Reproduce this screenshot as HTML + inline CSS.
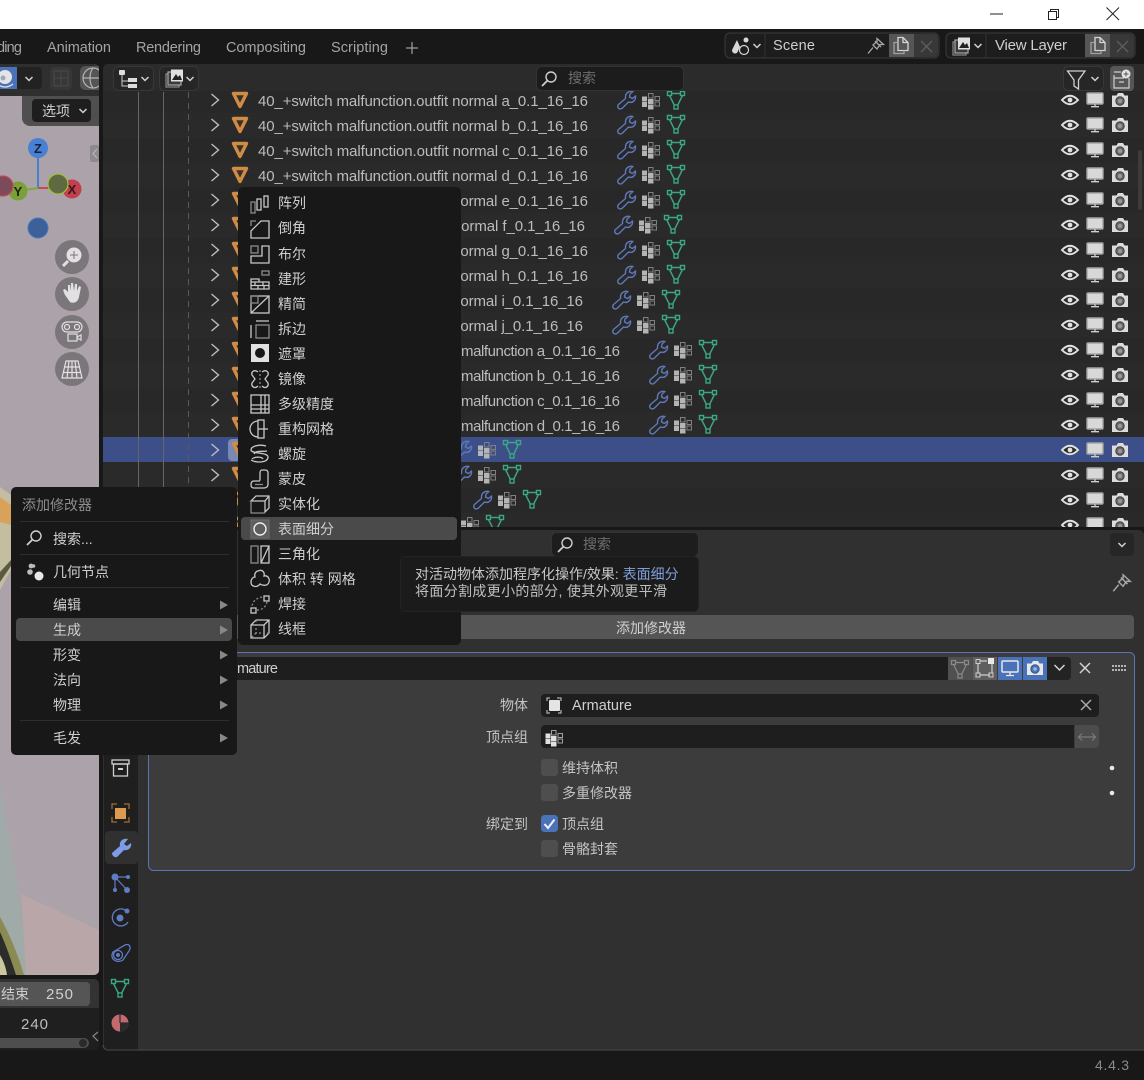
<!DOCTYPE html>
<html><head><meta charset="utf-8"><style>
html,body{margin:0;padding:0;background:#181818;width:1144px;height:1080px;overflow:hidden}
svg{display:block;font-family:"Liberation Sans","Noto Sans CJK SC",sans-serif}
.t{font-size:15px;fill:#bcbcbc}
.m{font-size:14px;fill:#cfcfcf}
.l{font-size:14.5px;fill:#cfcfcf}
.p{font-size:14px;fill:#c4c4c4}
.s{fill:none;stroke:#c8c8c8;stroke-width:1.3}
.d{fill:none;stroke:#8a8a8a;stroke-width:1.3}
</style></head><body>
<svg width="1144" height="1080" viewBox="0 0 1144 1080" xmlns="http://www.w3.org/2000/svg">
<defs>
<g id="tri"><path d="M-6.500-6.500H6.500L0 6.500Z" fill="#3a3028" stroke="#d08b47" stroke-width="3.400" stroke-linejoin="round"/></g>
<path id="chev" d="M-3.500-6L3.500 0L-3.500 6" fill="none" stroke="#bdbdbd" stroke-width="1.400"/>
<path id="dn" d="M-3.500-2L0 1.500L3.500-2" fill="none" stroke="#d0d0d0" stroke-width="1.500"/>
<path id="wr" d="M7-8.500C3-9.500-.5-7-.5-3L-.5-1.500L-7.500 4.500C-10 7.500-6 10.500-3.500 8L2.500 2C7 3.500 10 0 9.500-4L6.500-1.500L3.500-3L4-6Z" fill="none" stroke="#6078b8" stroke-width="1.400" stroke-linejoin="round"/>
<g id="vg"><g fill="#b4b4b4"><rect x="-9" y="-3.500" width="5" height="5"/><rect x="-9" y="2" width="5" height="5"/><rect x="-3" y="-1" width="5.500" height="5"/><rect x="-3" y="4.500" width="5.500" height="5"/></g><g fill="none" stroke="#808080"><rect x="-2.500" y="-6.500" width="4.500" height="4.500"/><rect x="4" y="-3.500" width="4.500" height="4"/><rect x="4" y="2" width="4.500" height="4"/></g></g>
<g id="gt" fill="none" stroke="#3aa880" stroke-width="1.400"><path d="M-5-6.500H5M-6.500-4.500L-1.500 5.500M6.500-4.500L1.500 5.500"/><rect x="-8.500" y="-8.500" width="4" height="4"/><rect x="4.500" y="-8.500" width="4" height="4"/><rect x="-2" y="5" width="4" height="4"/></g>
<g id="eye"><path d="M-8 0Q0-8.500 8 0Q0 8.500-8 0Z" fill="#2a2a2a" stroke="#e2e2e2" stroke-width="1.900"/><circle r="2.400" fill="#e2e2e2"/></g>
<g id="mon"><rect x="-8" y="-7" width="16" height="11" rx="1" fill="#d8d8d8" stroke="#a4a4a4" stroke-width="1.400"/><path d="M0 4V6.500M-4 6.700H4" stroke="#cfcfcf" stroke-width="1.300"/></g>
<g id="cam"><path d="M-8-4.500H-3.500L-2-7H3L4.500-4.500H8V7H-8Z" fill="#dcdcdc"/><circle cy="1" r="4.200" fill="#6a6a6a" stroke="#3e3e3e" stroke-width="1"/><circle cy="1" r="2" fill="#9a9a9a"/></g>
<g id="pin" fill="none" stroke="#a8a8a8" stroke-width="1.300"><path d="M-1-5L5 1M1-7.500L7.500-1.500L4-1.500L1 3L-3-1L1-4.500ZM-3 1.500L-8 7.500"/></g>
<path id="tm" d="M0-4.500L8 0L0 4.500Z" fill="#888"/>
<g id="srch" fill="none" stroke="#cfcfcf" stroke-width="1.400"><circle cx="2" cy="-2" r="5"/><path d="M-1.500 1.500L-7 7" stroke-width="1.800"/></g>
<g id="cp" fill="none" stroke="#d6d6d6" stroke-width="1.300"><path d="M-3-8H2L7-3V5H-3Z"/><path d="M-3-3H-7V8H3V5" stroke="#a0a0a0"/><path d="M2-8V-3H7"/></g>
<g id="vl"><rect x="-9" y="-4" width="13" height="13" fill="none" stroke="#8a8a8a" stroke-width="1.200"/><rect x="-7" y="-6" width="13" height="13" fill="#3a3a3a" stroke="#aaa" stroke-width="1.200"/><rect x="-4" y="-8.500" width="12" height="12" fill="#e0e0e0"/><path d="M-3 2L1-4L3-1L5-3L7 2Z" fill="#222"/></g>
<clipPath id="vc"><rect x="0" y="64" width="99" height="911"/></clipPath>
<clipPath id="oc"><rect x="103" y="90" width="1041" height="437"/></clipPath>
</defs>

<!-- title bar -->
<rect width="1144" height="29" fill="#fff"/>
<path d="M990 14H1003" stroke="#222" stroke-width="1"/>
<path d="M1048.500 11.500H1056.500V19.500H1048.500ZM1050.500 11V9.500H1058.500V17.500H1057" fill="none" stroke="#222" stroke-width="1"/>
<path d="M1106.500 7.500L1119 20M1119 7.500L1106.500 20" stroke="#222" stroke-width="1"/>
<rect y="29" width="1144" height="1051" fill="#181818"/>

<!-- tabs -->
<g font-size="14.500" fill="#a4a4a4">
<text x="-3" y="52" textLength="25">ding</text>
<text x="47" y="52" textLength="64">Animation</text>
<text x="136" y="52" textLength="65">Rendering</text>
<text x="226" y="52" textLength="80">Compositing</text>
<text x="331" y="52" textLength="57">Scripting</text>
</g>
<path d="M412 42V54M406 48H418" stroke="#9a9a9a" stroke-width="1.300"/>

<!-- scene widget -->
<rect x="725" y="33" width="214" height="25" rx="5" fill="#1d1d1d" stroke="#3a3a3a"/>
<rect x="889" y="34" width="25" height="23" fill="#565656"/>
<path d="M914 34H934a4 4 0 0 1 4 4V53a4 4 0 0 1-4 4H914Z" fill="#383838"/>
<path d="M765 34V57" stroke="#333"/>
<path d="M737 40L732 50C732 54 737 55 738 51L740 47Z" fill="#d8d8d8"/><circle cx="746" cy="40" r="2.500" fill="#d8d8d8"/><circle cx="744" cy="50" r="4.500" fill="none" stroke="#d8d8d8" stroke-width="1.200"/>
<use href="#dn" x="757" y="46"/>
<text x="773" y="50" class="l" textLength="42">Scene</text>
<use href="#pin" x="876" y="46"/>
<use href="#cp" x="901" y="45.500"/>
<path d="M921 41L932 52M932 41L921 52" stroke="#5c5c5c" stroke-width="1.500"/>
<rect x="946" y="33" width="189" height="25" rx="5" fill="#1d1d1d" stroke="#3a3a3a"/>
<rect x="1085" y="34" width="25" height="23" fill="#565656"/>
<path d="M1110 34H1130a4 4 0 0 1 4 4V53a4 4 0 0 1-4 4H1110Z" fill="#383838"/>
<path d="M986 34V57" stroke="#333"/>
<use href="#vl" x="962" y="46"/>
<use href="#dn" x="978" y="46"/>
<text x="995" y="50" font-size="15" fill="#cfcfcf" textLength="72">View Layer</text>
<use href="#cp" x="1098" y="45.500"/>
<path d="M1117 41L1128 52M1128 41L1117 52" stroke="#5c5c5c" stroke-width="1.500"/>

<!-- viewport -->
<path d="M0 64H94a5 5 0 0 1 5 5V970a5 5 0 0 1-5 5H0Z" fill="#aba3a9"/>
<path d="M0 64H94a5 5 0 0 1 5 5V96H0Z" fill="#2f2f2f"/>
<path d="M22 96H99V126H30a8 8 0 0 1-8-8Z" fill="#4f4f4f"/>
<rect x="32" y="99" width="59" height="23" rx="4" fill="#1e1e1e"/>
<text x="42" y="116" class="m">选项</text>
<use href="#dn" x="83" y="111"/>
<path d="M0 67H17V89H0Z" fill="#4a72b8"/>
<path d="M17 67H38a4 4 0 0 1 4 4V85a4 4 0 0 1-4 4H17Z" fill="#222"/>
<circle cx="5" cy="77" r="7" fill="#e4e4e4"/><circle cx="3" cy="78" r="2.500" fill="#9ab"/><path d="M-3 84Q5 90 13 84" fill="none" stroke="#e4e4e4" stroke-width="1.300"/>
<use href="#dn" x="29" y="79"/>
<rect x="50" y="67" width="22" height="23" rx="4" fill="#373737"/>
<rect x="54" y="71" width="14" height="15" fill="none" stroke="#4a4a4a"/><path d="M61 71V86M54 78H68" stroke="#4a4a4a"/>
<path d="M85 66H99V90H85a5 5 0 0 1-5-5V71a5 5 0 0 1 5-5Z" fill="#555"/>
<g clip-path="url(#vc)" fill="none" stroke="#b4b4b4" stroke-width="1.200"><circle cx="93" cy="78" r="10"/><path d="M83 78H103M93 68C89 73 89 83 93 88"/></g>
<rect x="90" y="145" width="9" height="17" rx="2" fill="#8f8a8e"/><path d="M97 149L93 153.500L97 158" fill="none" stroke="#b8b4b6" stroke-width="1.200"/>
<!-- gizmo -->
<path d="M38 156V189" stroke="#4a7fd0" stroke-width="2"/>
<path d="M38 188H58" stroke="#c84a50" stroke-width="2"/>
<path d="M18 191L38 188" stroke="#7fa83c" stroke-width="2"/>
<circle cx="38" cy="148" r="10" fill="#4a80d4"/><text x="38" y="153" font-size="13" font-weight="bold" text-anchor="middle" fill="#16223c">Z</text>
<circle cx="18" cy="191" r="9.500" fill="#7ca038"/><text x="18" y="196" font-size="13" font-weight="bold" text-anchor="middle" fill="#1a2410">Y</text>
<circle cx="72" cy="189" r="9.500" fill="#c04050"/><text x="72" y="194" font-size="13" font-weight="bold" text-anchor="middle" fill="#3a1218">X</text>
<circle cx="3" cy="186" r="10" fill="#7c4a58" stroke="#c04a5a" stroke-width="1.200"/>
<circle cx="58" cy="184" r="10" fill="#5f6a40" stroke="#9cc040" stroke-width="1.200"/>
<circle cx="38" cy="228" r="10" fill="#3d6098" stroke="#4a78c0" stroke-width="1"/>
<!-- nav -->
<g fill="#7b767a"><circle cx="72" cy="257" r="17"/><circle cx="72" cy="294" r="17"/><circle cx="72" cy="332" r="17"/><circle cx="72" cy="369" r="17"/></g>
<circle cx="74" cy="255" r="7.500" fill="#e2e0e2"/><path d="M74 251V259M70 255H78" stroke="#7b767a"/><path d="M68 261L63 266" stroke="#e2e0e2" stroke-width="3"/>
<path d="M65 295L63 290L65 289L68 292V285L70 285L71 291V283H73L74 291L75 284H77L77 291L79 286L81 287L79 297C78 302 74 304 70 302Z" fill="#e2e0e2"/>
<g fill="none" stroke="#e2e0e2" stroke-width="1.200"><rect x="62" y="322" width="20" height="10" rx="5"/><circle cx="67" cy="327" r="2.500"/><circle cx="77" cy="327" r="2.500"/><rect x="68" y="334" width="9" height="7"/><path d="M77 337L81 335V340L77 338"/></g>
<g fill="none" stroke="#e2e0e2" stroke-width="1.200"><path d="M66 361H78L82 378H62ZM72 361V378M64 367H80M63 372.500H81M69 361L67 378M75 361L77 378"/></g>
<!-- model bits -->
<path d="M0 487L11 495V570L0 590Z" fill="#c4bea0"/>
<path d="M0 497L11 505V525L0 522Z" fill="#d8a25a"/>
<path d="M0 572L11 560V566L0 582Z" fill="#5a5a40"/>
<path d="M0 783L17 883L28 967L25 975H0Z" fill="#a0aaa8"/>
<path d="M21 894L99 930V970a5 5 0 0 1-5 5H26Z" fill="#b8a6a8"/>
<path d="M0 917C10 935 18 955 24 975H0Z" fill="#8a8a52"/>
<path d="M0 932C6 945 11 960 16 975H0Z" fill="#2c2c2a"/>
<path d="M0 955C3 960 6 967 7 975H0Z" fill="#c9c79c"/>

<!-- timeline -->
<path d="M0 979H94a5 5 0 0 1 5 5V1045a5 5 0 0 1-5 5H0Z" fill="#1f1f1f"/>
<path d="M0 979H94a5 5 0 0 1 5 5V1008H0Z" fill="#333"/>
<rect x="-4" y="982" width="94" height="24" rx="4" fill="#555"/>
<text x="1" y="999" class="m">结束</text><text x="46" y="999" font-size="15" fill="#cfcfcf" textLength="27">250</text>
<text x="21" y="1029" class="t" textLength="27">240</text>
<rect x="-4" y="1038" width="93" height="10" rx="5" fill="#4e4e4e"/><circle cx="83" cy="1043" r="4" fill="#2a2a2a"/>
<path d="M98 1032L93 1036L98 1041" fill="none" stroke="#888" stroke-width="1.200"/>

<!-- outliner -->
<path d="M108 64H1144V527H103V69a5 5 0 0 1 5-5Z" fill="#2a2a2a"/>
<g fill="#282828"><rect x="103" y="88" width="1041" height="25"/><rect x="103" y="138" width="1041" height="25"/><rect x="103" y="188" width="1041" height="25"/><rect x="103" y="238" width="1041" height="25"/><rect x="103" y="288" width="1041" height="25"/><rect x="103" y="338" width="1041" height="25"/><rect x="103" y="388" width="1041" height="25"/><rect x="103" y="488" width="1041" height="25"/></g>
<rect x="103" y="437" width="1041" height="25" fill="#3c4f88"/>
<path d="M138.500 92V527M163.500 92V527" stroke="#666" stroke-width="1"/>
<path d="M188.500 92V527" stroke="#5a5a5a" stroke-width="1" stroke-dasharray="6 5"/>
<rect x="1138" y="150" width="4" height="60" rx="2" fill="#3c3c3c"/>
<text class="t" x="258" y="106" textLength="330">40_+switch malfunction.outfit normal a_0.1_16_16</text>
<text class="t" x="258" y="131" textLength="330">40_+switch malfunction.outfit normal b_0.1_16_16</text>
<text class="t" x="258" y="156" textLength="330">40_+switch malfunction.outfit normal c_0.1_16_16</text>
<text class="t" x="258" y="181" textLength="330">40_+switch malfunction.outfit normal d_0.1_16_16</text>
<text class="t" x="258" y="206" textLength="330">40_+switch malfunction.outfit normal e_0.1_16_16</text>
<text class="t" x="258" y="231" textLength="327">40_+switch malfunction.outfit normal f_0.1_16_16</text>
<text class="t" x="258" y="256" textLength="330">40_+switch malfunction.outfit normal g_0.1_16_16</text>
<text class="t" x="258" y="281" textLength="330">40_+switch malfunction.outfit normal h_0.1_16_16</text>
<text class="t" x="258" y="306" textLength="325">40_+switch malfunction.outfit normal i_0.1_16_16</text>
<text class="t" x="258" y="331" textLength="325">40_+switch malfunction.outfit normal j_0.1_16_16</text>
<text class="t" x="461" y="356" textLength="159">malfunction a_0.1_16_16</text>
<text class="t" x="461" y="381" textLength="159">malfunction b_0.1_16_16</text>
<text class="t" x="461" y="406" textLength="159">malfunction c_0.1_16_16</text>
<text class="t" x="461" y="431" textLength="159">malfunction d_0.1_16_16</text>
<g clip-path="url(#oc)">
<use href="#chev" x="215" y="100"/><use href="#chev" x="215" y="125"/><use href="#chev" x="215" y="150"/><use href="#chev" x="215" y="175"/><use href="#chev" x="215" y="200"/><use href="#chev" x="215" y="225"/><use href="#chev" x="215" y="250"/><use href="#chev" x="215" y="275"/><use href="#chev" x="215" y="300"/><use href="#chev" x="215" y="325"/><use href="#chev" x="215" y="350"/><use href="#chev" x="215" y="375"/><use href="#chev" x="215" y="400"/><use href="#chev" x="215" y="425"/><use href="#chev" x="215" y="450"/><use href="#chev" x="215" y="475"/><use href="#chev" x="215" y="500"/><use href="#chev" x="215" y="525"/>
<rect x="228" y="439" width="24" height="22" rx="4" fill="#7a88b4"/>
<use href="#tri" x="240" y="100"/><use href="#tri" x="240" y="125"/><use href="#tri" x="240" y="150"/><use href="#tri" x="240" y="175"/><use href="#tri" x="240" y="200"/><use href="#tri" x="240" y="225"/><use href="#tri" x="240" y="250"/><use href="#tri" x="240" y="275"/><use href="#tri" x="240" y="300"/><use href="#tri" x="240" y="325"/><use href="#tri" x="240" y="350"/><use href="#tri" x="240" y="375"/><use href="#tri" x="240" y="400"/><use href="#tri" x="240" y="425"/><use href="#tri" x="240" y="450"/><use href="#tri" x="240" y="475"/><use href="#tri" x="240" y="500"/><use href="#tri" x="240" y="525"/>
<use href="#wr" x="626" y="100"/><use href="#vg" x="651" y="100"/><use href="#gt" x="676" y="100"/>
<use href="#wr" x="626" y="125"/><use href="#vg" x="651" y="124"/><use href="#gt" x="676" y="124"/>
<use href="#wr" x="626" y="150"/><use href="#vg" x="651" y="149"/><use href="#gt" x="676" y="149"/>
<use href="#wr" x="626" y="175"/><use href="#vg" x="651" y="174"/><use href="#gt" x="676" y="174"/>
<use href="#wr" x="626" y="200"/><use href="#vg" x="651" y="199"/><use href="#gt" x="676" y="199"/>
<use href="#wr" x="623" y="225"/><use href="#vg" x="648" y="224"/><use href="#gt" x="673" y="224"/>
<use href="#wr" x="626" y="250"/><use href="#vg" x="651" y="249"/><use href="#gt" x="676" y="249"/>
<use href="#wr" x="626" y="275"/><use href="#vg" x="651" y="274"/><use href="#gt" x="676" y="274"/>
<use href="#wr" x="621" y="300"/><use href="#vg" x="646" y="299"/><use href="#gt" x="671" y="299"/>
<use href="#wr" x="621" y="325"/><use href="#vg" x="646" y="324"/><use href="#gt" x="671" y="324"/>
<use href="#wr" x="658" y="350"/><use href="#vg" x="683" y="349"/><use href="#gt" x="708" y="349"/>
<use href="#wr" x="658" y="375"/><use href="#vg" x="683" y="374"/><use href="#gt" x="708" y="374"/>
<use href="#wr" x="658" y="400"/><use href="#vg" x="683" y="399"/><use href="#gt" x="708" y="399"/>
<use href="#wr" x="658" y="425"/><use href="#vg" x="683" y="424"/><use href="#gt" x="708" y="424"/>
<use href="#wr" x="462" y="450"/><use href="#vg" x="487" y="449"/><use href="#gt" x="512" y="449"/>
<use href="#wr" x="462" y="475"/><use href="#vg" x="487" y="474"/><use href="#gt" x="512" y="474"/>
<use href="#wr" x="482" y="500"/><use href="#vg" x="507" y="499"/><use href="#gt" x="532" y="499"/>
<use href="#wr" x="445" y="525"/><use href="#vg" x="470" y="524"/><use href="#gt" x="495" y="524"/>
<use href="#eye" x="1070" y="100"/><use href="#mon" x="1095" y="100"/><use href="#cam" x="1120" y="100"/>
<use href="#eye" x="1070" y="125"/><use href="#mon" x="1095" y="125"/><use href="#cam" x="1120" y="125"/>
<use href="#eye" x="1070" y="150"/><use href="#mon" x="1095" y="150"/><use href="#cam" x="1120" y="150"/>
<use href="#eye" x="1070" y="175"/><use href="#mon" x="1095" y="175"/><use href="#cam" x="1120" y="175"/>
<use href="#eye" x="1070" y="200"/><use href="#mon" x="1095" y="200"/><use href="#cam" x="1120" y="200"/>
<use href="#eye" x="1070" y="225"/><use href="#mon" x="1095" y="225"/><use href="#cam" x="1120" y="225"/>
<use href="#eye" x="1070" y="250"/><use href="#mon" x="1095" y="250"/><use href="#cam" x="1120" y="250"/>
<use href="#eye" x="1070" y="275"/><use href="#mon" x="1095" y="275"/><use href="#cam" x="1120" y="275"/>
<use href="#eye" x="1070" y="300"/><use href="#mon" x="1095" y="300"/><use href="#cam" x="1120" y="300"/>
<use href="#eye" x="1070" y="325"/><use href="#mon" x="1095" y="325"/><use href="#cam" x="1120" y="325"/>
<use href="#eye" x="1070" y="350"/><use href="#mon" x="1095" y="350"/><use href="#cam" x="1120" y="350"/>
<use href="#eye" x="1070" y="375"/><use href="#mon" x="1095" y="375"/><use href="#cam" x="1120" y="375"/>
<use href="#eye" x="1070" y="400"/><use href="#mon" x="1095" y="400"/><use href="#cam" x="1120" y="400"/>
<use href="#eye" x="1070" y="425"/><use href="#mon" x="1095" y="425"/><use href="#cam" x="1120" y="425"/>
<use href="#eye" x="1070" y="450"/><use href="#mon" x="1095" y="450"/><use href="#cam" x="1120" y="450"/>
<use href="#eye" x="1070" y="475"/><use href="#mon" x="1095" y="475"/><use href="#cam" x="1120" y="475"/>
<use href="#eye" x="1070" y="500"/><use href="#mon" x="1095" y="500"/><use href="#cam" x="1120" y="500"/>
<use href="#eye" x="1070" y="525"/><use href="#mon" x="1095" y="525"/><use href="#cam" x="1120" y="525"/>
</g>
<!-- outliner header -->
<path d="M108 64H1144V91H103V69a5 5 0 0 1 5-5Z" fill="#2b2b2b"/>
<rect x="113.500" y="66.500" width="40" height="24" rx="5" fill="#262626" stroke="#383838"/>
<rect x="119" y="70" width="6" height="5" rx="1" fill="#ddd"/><path d="M122 75V86H128M122 81H128" fill="none" stroke="#ccc"/><rect x="128" y="78" width="9" height="4" fill="#ddd"/><rect x="128" y="84" width="9" height="4" fill="#ddd"/>
<use href="#dn" x="145" y="79"/>
<rect x="159.500" y="66.500" width="39" height="24" rx="5" fill="#262626" stroke="#383838"/>
<use href="#vl" x="175" y="78"/>
<use href="#dn" x="190" y="79"/>
<rect x="536.500" y="66.500" width="147" height="24" rx="5" fill="#1c1c1c" stroke="#333"/>
<use href="#srch" x="549" y="79"/>
<text x="568" y="83" font-size="14" fill="#6e6e6e">搜索</text>
<rect x="1063.500" y="66.500" width="40" height="24" rx="5" fill="#262626" stroke="#383838"/>
<path d="M1067.500 71H1085L1078.500 80V89L1074 86V80Z" fill="none" stroke="#d0d0d0" stroke-width="1.300"/>
<use href="#dn" x="1095" y="79"/>
<rect x="1110" y="66" width="24" height="25" rx="4" fill="#565656"/>
<path d="M1114 72H1121M1114 75V88H1129V78M1114 78H1124M1119 82H1124" fill="none" stroke="#cfcfcf" stroke-width="1.200"/>
<circle cx="1126" cy="74" r="4.500" fill="#e4e4e4"/><path d="M1126 71.500V76.500M1123.500 74H1128.500" stroke="#555"/>

<!-- properties -->
<path d="M108 530H1139a5 5 0 0 1 5 5V1050H108a5 5 0 0 1-5-5V535a5 5 0 0 1 5-5Z" fill="#303030"/>
<path d="M108 531H138V1050H108a4 4 0 0 1-4-4V535a4 4 0 0 1 4-4Z" fill="#1f1f1f"/>
<path d="M103 1045a5 5 0 0 0 5 5H1144" fill="none" stroke="#4a4a4a"/>
<rect x="551.500" y="532.500" width="147" height="24" rx="5" fill="#1d1d1d" stroke="#333"/>
<use href="#srch" x="565" y="545"/>
<text x="583" y="549" font-size="14" fill="#6e6e6e">搜索</text>
<rect x="1110" y="533" width="24" height="23" rx="4" fill="#262626"/>
<use href="#dn" x="1122" y="545"/>
<g transform="translate(1122,583) scale(1.100)"><use href="#pin"/></g>
<rect x="150" y="615" width="984" height="24" rx="4" fill="#555"/>
<text x="651" y="633" class="m" text-anchor="middle">添加修改器</text>
<rect x="148.500" y="652.500" width="986" height="218" rx="5" fill="#3c3c3c" stroke="#5b74b4"/>
<path d="M152 657H948V680H152Z" fill="#1e1e1e"/>
<text x="237" y="673" class="l" textLength="41">mature</text>
<rect x="948" y="657" width="24" height="23" fill="#505050"/>
<rect x="972.500" y="657" width="24.500" height="23" fill="#5e5e5e"/>
<rect x="998" y="657" width="24" height="23" fill="#4a72b8"/>
<rect x="1023" y="657" width="24" height="23" fill="#4a72b8"/>
<path d="M1047 657H1067a4 4 0 0 1 4 4V676a4 4 0 0 1-4 4H1047Z" fill="#232323"/>
<g transform="translate(960,669)" fill="none" stroke="#8a8a8a" stroke-width="1.200"><path d="M-5-6.500H5M-6.500-4.500L-1.500 5.500M6.500-4.500L1.500 5.500"/><rect x="-8.500" y="-8.500" width="4" height="4"/><rect x="4.500" y="-8.500" width="4" height="4"/><rect x="-2" y="5" width="4" height="4"/></g>
<g transform="translate(984,668)"><path d="M-6-5V5M-4 7H6M-4-7H3M8-4V5" fill="none" stroke="#cfcfcf" stroke-width="1.200"/><rect x="-8" y="-8.500" width="4" height="4" fill="none" stroke="#cfcfcf"/><rect x="-8" y="5" width="4" height="4" fill="none" stroke="#cfcfcf"/><rect x="5" y="5" width="4" height="4" fill="none" stroke="#cfcfcf"/><rect x="4" y="-10" width="6" height="6" fill="#e8e8e8"/></g>
<g transform="translate(1010,668)"><rect x="-8" y="-7" width="16" height="11" rx="1" fill="#4a72b8" stroke="#e8e8e8" stroke-width="1.500"/><path d="M0 4V7M-4 7.500H4" stroke="#e8e8e8" stroke-width="1.300"/></g>
<g transform="translate(1035,668)"><path d="M-8-4.500H-3.500L-2-7H3L4.500-4.500H8V7H-8Z" fill="#e8e8e8"/><circle cy="1" r="4.200" fill="#4a72b8" stroke="#35568f"/><circle cy="1" r="1.800" fill="#9db6e2"/></g>
<path d="M1054.500 665L1059.500 670L1064.500 665" fill="none" stroke="#d4d4d4" stroke-width="1.500"/>
<path d="M1080 663L1090 673M1090 663L1080 673" stroke="#d4d4d4" stroke-width="1.500"/>
<path d="M1112 666H1127M1112 670H1127" stroke="#b4b4b4" stroke-width="2" stroke-dasharray="2 1"/>
<text x="528" y="710" class="p" text-anchor="end">物体</text>
<text x="528" y="742" class="p" text-anchor="end">顶点组</text>
<text x="528" y="829" class="p" text-anchor="end">绑定到</text>
<rect x="541" y="694" width="558" height="23" rx="4" fill="#1e1e1e"/>
<rect x="549" y="700" width="11" height="11" rx="1" fill="#e4e4e4"/><path d="M550 698H547V701M557 698H561V701M550 713H547V710M558 713H561V710" fill="none" stroke="#aaa" stroke-width="1.300"/>
<text x="572" y="710" class="l" textLength="60">Armature</text>
<path d="M1081 700L1091 710M1091 700L1081 710" stroke="#aaa" stroke-width="1.500"/>
<path d="M545 725H1074V748H545a4 4 0 0 1-4-4V729a4 4 0 0 1 4-4Z" fill="#1e1e1e"/>
<g transform="translate(554,737)"><g fill="#e0e0e0"><rect x="-8.500" y="-3.500" width="5" height="5"/><rect x="-8.500" y="2" width="5" height="5"/><rect x="-3" y="-1" width="5.500" height="5"/><rect x="-3" y="4.500" width="5.500" height="5"/></g><g fill="none" stroke="#a0a0a0"><rect x="-2.500" y="-6.500" width="4.500" height="4.500"/><rect x="4" y="-3.500" width="4.500" height="4"/><rect x="4" y="2" width="4.500" height="4"/></g></g>
<path d="M1075 725H1095a4 4 0 0 1 4 4V744a4 4 0 0 1-4 4H1075Z" fill="#4c4c4c"/>
<path d="M1079 737H1095M1082 733.500L1078.500 737L1082 740.500M1092 733.500L1095.500 737L1092 740.500" fill="none" stroke="#7a7a7a" stroke-width="1.200"/>
<rect x="541" y="759" width="17" height="17" rx="3.500" fill="#4e4e4e"/>
<rect x="541" y="784" width="17" height="17" rx="3.500" fill="#4e4e4e"/>
<rect x="541" y="815" width="17" height="17" rx="3.500" fill="#4a72b8"/>
<path d="M544.500 824L548 828L554.500 819.500" fill="none" stroke="#f0f0f0" stroke-width="2"/>
<rect x="541" y="840" width="17" height="17" rx="3.500" fill="#4e4e4e"/>
<text x="562" y="773" class="p">维持体积</text>
<text x="562" y="798" class="p">多重修改器</text>
<text x="562" y="829" class="p">顶点组</text>
<text x="562" y="854" class="p">骨骼封套</text>
<circle cx="1112" cy="768" r="2.300" fill="#e8e8e8"/><circle cx="1112" cy="793" r="2.300" fill="#e8e8e8"/>
<!-- tabs column -->
<g fill="none" stroke="#d0d0d0" stroke-width="1.300"><rect x="112" y="760" width="17" height="4"/><rect x="113.500" y="764" width="14" height="12"/></g><rect x="118" y="768" width="5" height="2" fill="#d0d0d0"/>
<rect x="115" y="808" width="11" height="11" fill="#dc9a4e"/><path d="M112 809V804H117M124 804H129V809M112 817V822H117M124 822H129V817" fill="none" stroke="#a06c32" stroke-width="1.300"/>
<rect x="105" y="831" width="33" height="33" rx="4" fill="#303030"/>
<path d="M128 839C123 838 119 841 120 846L112 853C112 856 115 858 117 857L124 850C128 851 132 848 131 843L127 846L124 844Z" fill="#7d9ce8"/>
<g fill="#5f7cc4"><circle cx="115" cy="877" r="3.500"/><circle cx="127" cy="890" r="3"/><circle cx="115" cy="890" r="2"/><circle cx="128" cy="877" r="2"/></g><path d="M115 877L127 890M115 877V890M115 877H128" stroke="#5f7cc4" stroke-width="1.200"/>
<circle cx="120" cy="918" r="3.500" fill="#5f7cc4"/><circle cx="127" cy="911" r="2.500" fill="#5f7cc4"/><path d="M125 910A8.500 8.500 0 1 0 128 922" fill="none" stroke="#5f7cc4" stroke-width="1.300"/>
<g fill="none" stroke="#5f7cc4" stroke-width="1.300"><path d="M113 952L125 945C130 943 131 948 129 951L123 960C117 964 109 959 113 952Z"/><circle cx="118" cy="955" r="4.500"/></g><circle cx="118" cy="955" r="2" fill="#5f7cc4"/>
<g transform="translate(120,988)"><use href="#gt"/></g>
<circle cx="120" cy="1023" r="8.500" fill="#c26a6e"/><path d="M120 1023H128.500A8.500 8.500 0 0 1 120 1031.500Z" fill="#2a2a2a"/><path d="M120 1023V1014.500M120 1023H128.500" stroke="#2a2a2a" stroke-width="1.200"/>

<text x="1095" y="1070" font-size="14" fill="#8a8a8a" textLength="34">4.4.3</text>

<!-- generate submenu -->
<rect x="238" y="187" width="223" height="458" rx="5" fill="#181818"/>
<rect x="241" y="517" width="216" height="23" rx="4" fill="#4a4a4a"/>
<text class="m" x="278" y="208">阵列</text><text class="m" x="278" y="233">倒角</text><text class="m" x="278" y="259">布尔</text><text class="m" x="278" y="284">建形</text><text class="m" x="278" y="309">精简</text><text class="m" x="278" y="334">拆边</text><text class="m" x="278" y="359">遮罩</text><text class="m" x="278" y="384">镜像</text><text class="m" x="278" y="409">多级精度</text><text class="m" x="278" y="434">重构网格</text><text class="m" x="278" y="459">螺旋</text><text class="m" x="278" y="484">蒙皮</text><text class="m" x="278" y="509">实体化</text><text class="m" x="278" y="534">表面细分</text><text class="m" x="278" y="559">三角化</text><text class="m" x="278" y="584">体积 转 网格</text><text class="m" x="278" y="609">焊接</text><text class="m" x="278" y="634">线框</text>
<g transform="translate(260,203)"><rect class="d" x="-9" y="-1" width="4" height="11"/><rect class="s" x="-3" y="-4" width="4" height="11"/><rect class="s" x="4" y="-7" width="4" height="11"/></g>
<g transform="translate(260,229)"><path class="s" d="M-9 2L1-8H9V9H-9Z"/><path class="d" d="M-9-3V-8H-4"/></g>
<g transform="translate(260,254)"><rect class="d" x="-9" y="-8" width="7" height="7"/><path class="s" d="M2-8H9V9H-9V2H2Z"/></g>
<g transform="translate(260,279)"><rect class="d" x="2" y="-8" width="7" height="4"/><path class="s" d="M-9 0H-1V3H9V10H-9ZM-9 3H-1M-9 6.500H9M-5 3V6.500M3 3V6.500M-2 6.500V10M4 6.500V10"/></g>
<g transform="translate(260,304)"><rect class="s" x="-9" y="-8" width="18" height="17"/><path class="s" d="M-9 9L9-8"/><rect class="d" x="-9" y="-8" width="7" height="7"/></g>
<g transform="translate(260,329)"><rect class="d" x="-4" y="-4" width="13" height="13"/><path class="s" d="M-4-8H9M-9-4V9"/></g>
<g transform="translate(260,353)"><rect x="-9" y="-9" width="18" height="18" fill="#e0e0e0"/><circle r="5" fill="#181818"/></g>
<g transform="translate(260,379)"><path class="s" d="M-2-7C-6-10-9-7-8-4L-5 0L-8 4C-9 8-5 10-2 7M2-7C6-10 9-7 8-4L5 0L8 4C9 8 5 10 2 7"/><path class="d" d="M0-9V9" stroke-dasharray="2 2"/></g>
<g transform="translate(260,404)"><rect class="s" x="-9" y="-9" width="18" height="18"/><path class="s" d="M1-9V9M5-9V9M-9 1H9M-9 5H9"/></g>
<g transform="translate(260,429)"><path class="s" d="M-2-8A8 8 0 0 0-2 8"/><rect class="s" x="-2" y="-9" width="6" height="18"/><path class="s" d="M-2 0H8"/></g>
<g transform="translate(260,454)"><path class="s" d="M6-8C0-10-9-8-9-4C-9 0 8-2 8 3C8 9-4 9-9 6"/><path class="s" d="M7-3C2-2-4-4-6 0"/><path class="s" d="M-8 5C-4 2 2 3 3 5"/></g>
<g transform="translate(260,479)"><path class="s" d="M2-9H5C7-9 8-8 8-6V5C8 8 6 9 4 9H-6C-8 9-9 8-9 6C-9 3-8 2-6 2H-1C0 2 0 1 0 0V-6C0-8 1-9 2-9Z"/><path class="d" d="M-5 5.500H3"/></g>
<g transform="translate(260,504)"><path class="s" d="M-9-3L-4-8H9V4L5 8V-3H-9ZM5-3L9-8"/><path class="d" d="M-9-3V9H5"/></g>
<g transform="translate(260,529)"><rect x="-9" y="-9" width="18" height="18" fill="#5e5e5e" stroke="#6e6e6e"/><circle r="6" fill="none" stroke="#eee" stroke-width="1.400"/></g>
<g transform="translate(260,554)"><rect class="d" x="-9" y="-8" width="7" height="17"/><rect class="s" x="1" y="-8" width="8" height="17"/><path class="s" d="M1 9L9-8"/></g>
<g transform="translate(260,579)"><path class="s" d="M-2-8C2-10 5-7 4-3C8-4 10 0 9 3C8 7 3 7 0 5C-3 9-9 8-9 3C-9 0-7-2-5-2C-6-5-4-8-2-8Z"/></g>
<g transform="translate(260,604)"><rect class="s" x="4" y="-8" width="5" height="5"/><rect class="s" x="-9" y="4" width="5" height="5"/><path class="d" d="M2-7C-4-6-8-2-8 3M-3 6C2 6 6 3 7-2" stroke-dasharray="2 2"/></g>
<g transform="translate(260,629)"><path class="s" d="M-9-4L-4-9H9V4L4 9H-9ZM-9-4H4V9M4-4L9-9"/><path class="d" d="M-4-9V4H9M-4 4L-9 9" stroke-dasharray="2 2"/></g>

<!-- tooltip -->
<rect x="400.500" y="556.500" width="298" height="55" rx="5" fill="#1b1b1b" stroke="#232323"/>
<text x="415" y="579" font-size="14" fill="#c8c8c8">对活动物体添加程序化操作/效果: <tspan fill="#7f9fd8">表面细分</tspan></text>
<text x="415" y="596" font-size="14" fill="#c0c0c0" textLength="252">将面分割成更小的部分, 使其外观更平滑</text>

<!-- add modifier menu -->
<rect x="11" y="487" width="226" height="268" rx="5" fill="#181818"/>
<text x="22" y="510" font-size="14" fill="#8c8c8c">添加修改器</text>
<path d="M20 521.500H229M20 554.500H229M20 587.500H229M20 720.500H229" stroke="#2e2e2e"/>
<use href="#srch" x="34" y="538"/>
<text x="53" y="544" class="m">搜索...</text>
<g fill="#bdbdbd"><circle cx="31" cy="566" r="2.400"/><circle cx="30" cy="572" r="2.800"/><circle cx="33.500" cy="566" r="1.800"/></g><circle cx="39" cy="576" r="4.500" fill="#e8e8e8"/>
<text x="53" y="577" class="m">几何节点</text>
<rect x="16" y="618" width="216" height="23" rx="4" fill="#4a4a4a"/>
<text x="53" y="610" class="m">编辑</text><text x="53" y="635" class="m">生成</text><text x="53" y="660" class="m">形变</text><text x="53" y="685" class="m">法向</text><text x="53" y="710" class="m">物理</text><text x="53" y="743" class="m">毛发</text>
<use href="#tm" x="220" y="605"/><use href="#tm" x="220" y="630"/><use href="#tm" x="220" y="655"/><use href="#tm" x="220" y="680"/><use href="#tm" x="220" y="705"/><use href="#tm" x="220" y="738"/>
</svg>
</body></html>
